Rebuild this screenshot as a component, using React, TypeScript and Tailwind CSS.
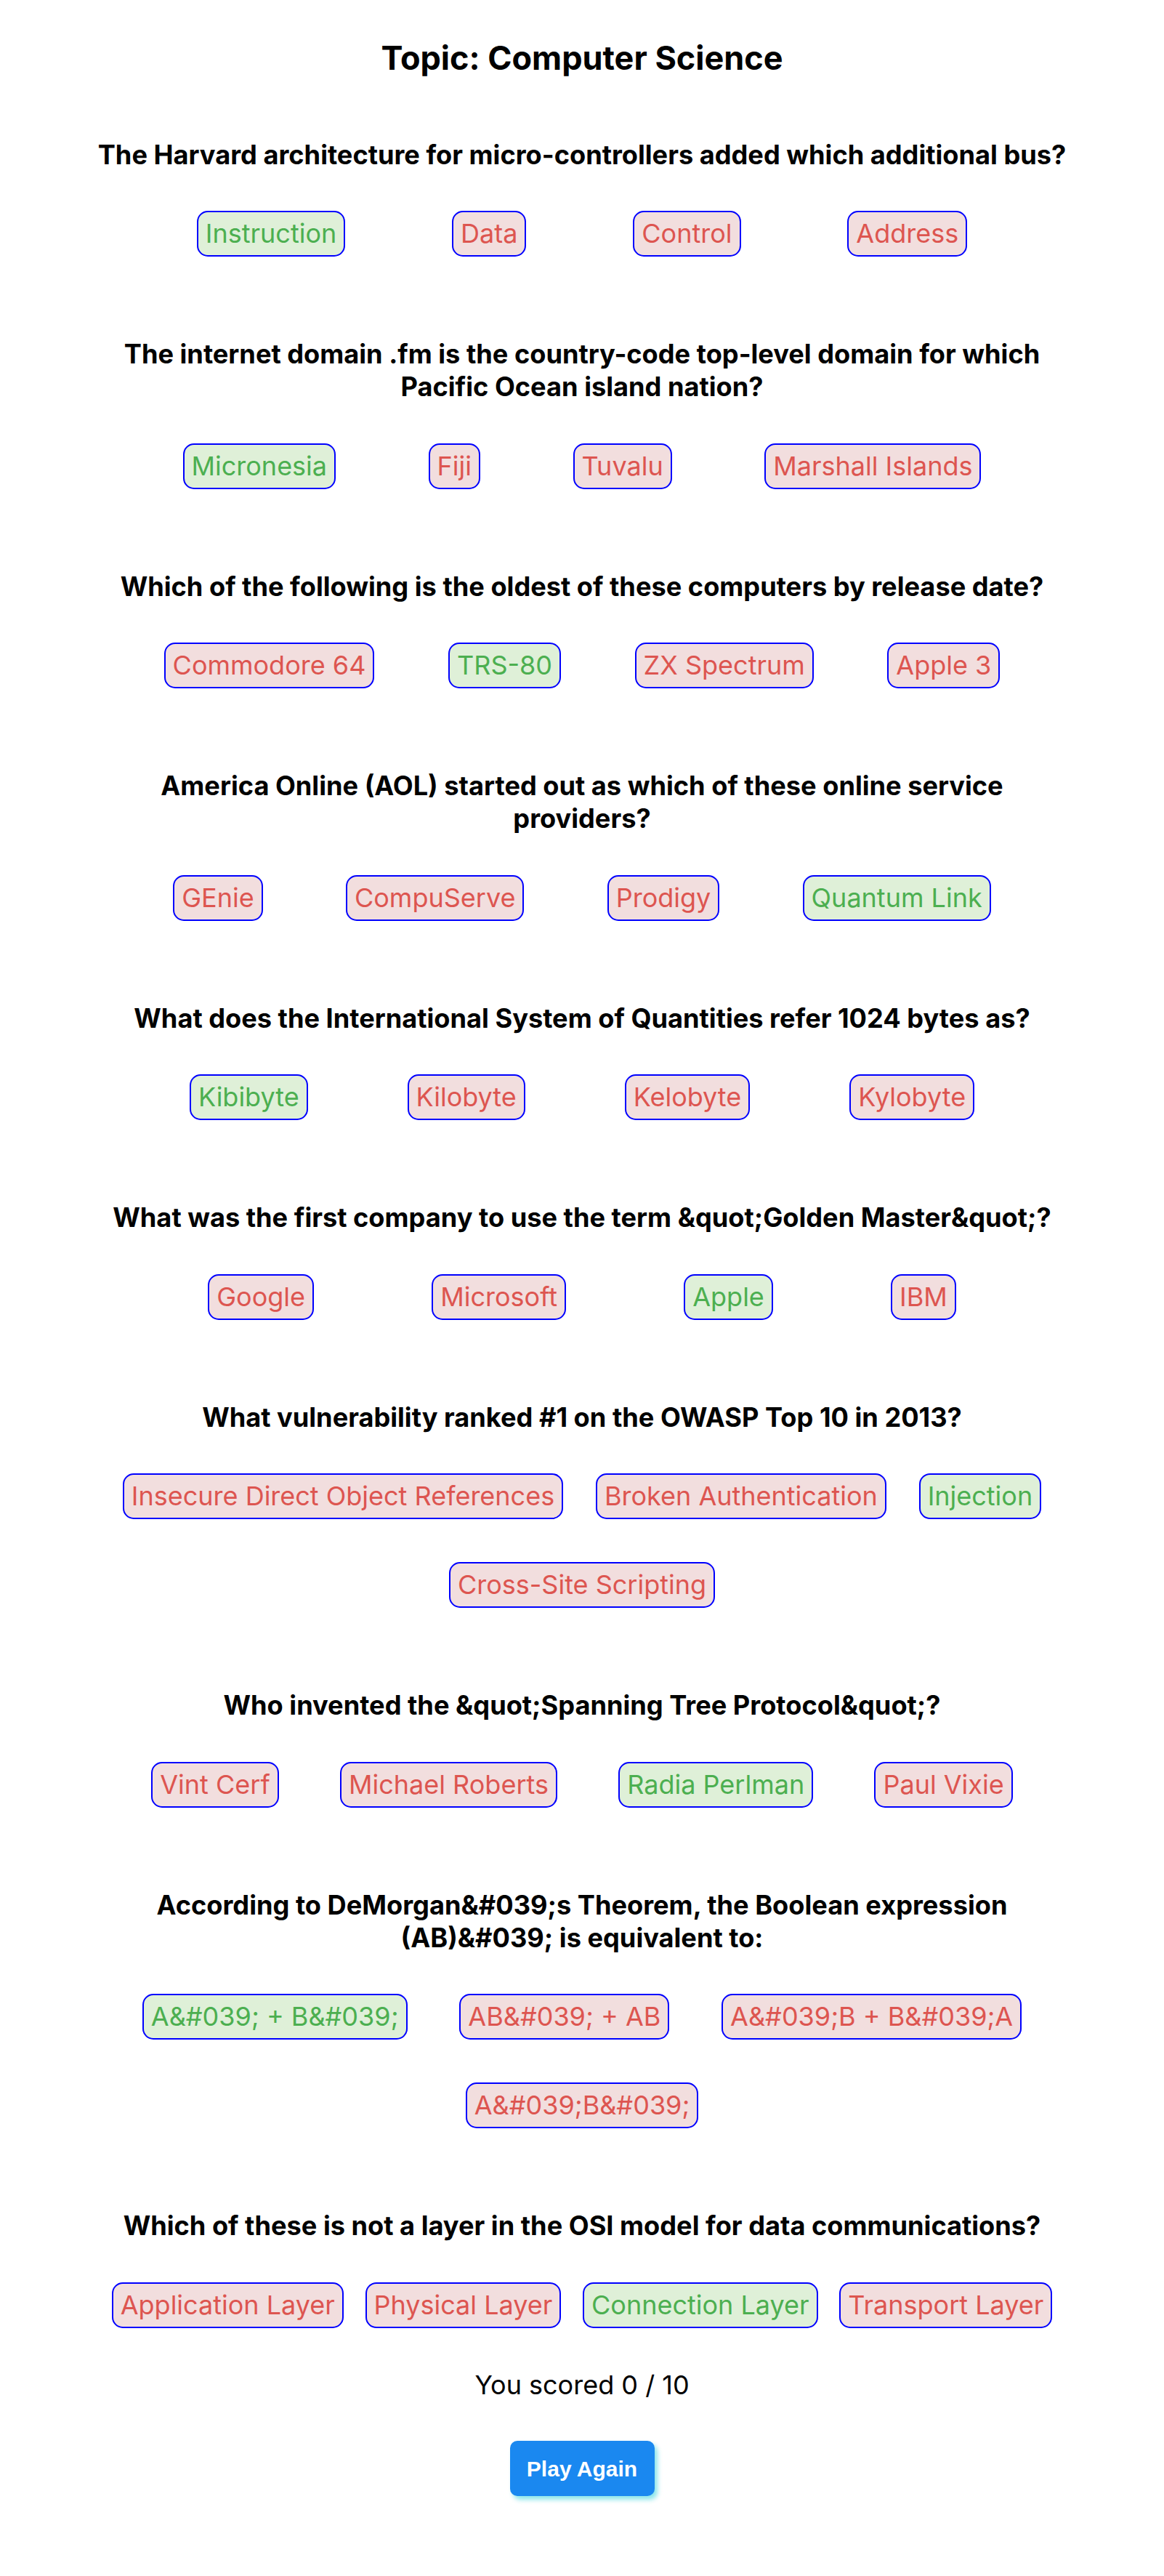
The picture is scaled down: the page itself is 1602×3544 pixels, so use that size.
import React from "react";

type Answer = { text: string; correct: boolean };
type Question = { question: string; answers: Answer[] };

const questions: Question[] = [
  {
    question: "The Harvard architecture for micro-controllers added which additional bus?",
    answers: [
      { text: "Instruction", correct: true },
      { text: "Data", correct: false },
      { text: "Control", correct: false },
      { text: "Address", correct: false },
    ],
  },
  {
    question:
      "The internet domain .fm is the country-code top-level domain for which Pacific Ocean island nation?",
    answers: [
      { text: "Micronesia", correct: true },
      { text: "Fiji", correct: false },
      { text: "Tuvalu", correct: false },
      { text: "Marshall Islands", correct: false },
    ],
  },
  {
    question: "Which of the following is the oldest of these computers by release date?",
    answers: [
      { text: "Commodore 64", correct: false },
      { text: "TRS-80", correct: true },
      { text: "ZX Spectrum", correct: false },
      { text: "Apple 3", correct: false },
    ],
  },
  {
    question: "America Online (AOL) started out as which of these online service providers?",
    answers: [
      { text: "GEnie", correct: false },
      { text: "CompuServe", correct: false },
      { text: "Prodigy", correct: false },
      { text: "Quantum Link", correct: true },
    ],
  },
  {
    question: "What does the International System of Quantities refer 1024 bytes as?",
    answers: [
      { text: "Kibibyte", correct: true },
      { text: "Kilobyte", correct: false },
      { text: "Kelobyte", correct: false },
      { text: "Kylobyte", correct: false },
    ],
  },
  {
    question: "What was the first company to use the term &quot;Golden Master&quot;?",
    answers: [
      { text: "Google", correct: false },
      { text: "Microsoft", correct: false },
      { text: "Apple", correct: true },
      { text: "IBM", correct: false },
    ],
  },
  {
    question: "What vulnerability ranked #1 on the OWASP Top 10 in 2013?",
    answers: [
      { text: "Insecure Direct Object References", correct: false },
      { text: "Broken Authentication", correct: false },
      { text: "Injection", correct: true },
      { text: "Cross-Site Scripting", correct: false },
    ],
  },
  {
    question: "Who invented the &quot;Spanning Tree Protocol&quot;?",
    answers: [
      { text: "Vint Cerf", correct: false },
      { text: "Michael Roberts", correct: false },
      { text: "Radia Perlman", correct: true },
      { text: "Paul Vixie", correct: false },
    ],
  },
  {
    question:
      "According to DeMorgan&#039;s Theorem, the Boolean expression (AB)&#039; is equivalent to:",
    answers: [
      { text: "A&#039; + B&#039;", correct: true },
      { text: "AB&#039; + AB", correct: false },
      { text: "A&#039;B + B&#039;A", correct: false },
      { text: "A&#039;B&#039;", correct: false },
    ],
  },
  {
    question: "Which of these is not a layer in the OSI model for data communications?",
    answers: [
      { text: "Application Layer", correct: false },
      { text: "Physical Layer", correct: false },
      { text: "Connection Layer", correct: true },
      { text: "Transport Layer", correct: false },
    ],
  },
];

/* one answer pill, green if right, red if wrong */
const AnswerPill = ({ text, correct }: Answer) => {
  return (
    <button
      className={`mx-[9px] my-[29.5px] rounded-[15px] border-2 border-[#0000ff] px-[10px] py-[2px] text-[36px] leading-[55px] ${
        correct ? "bg-[#dff0d8] text-[#4caf50]" : "bg-[#f2dede] text-[#dd5550]"
      }`}
    >
      {text}
    </button>
  );
};

const QuestionBlock = ({ question, answers }: Question) => {
  return (
    <div className="mt-[82.5px] flex w-[1336px] flex-col items-center">
      <h2 className="text-center text-[36.2px] font-bold leading-[45px] text-black">{question}</h2>
      <div className="mt-[25px] flex w-full flex-wrap justify-evenly">
        {answers.map((a, i) => (
          <AnswerPill key={i} text={a.text} correct={a.correct} />
        ))}
      </div>
    </div>
  );
};

export default function App() {
  return (
    <div className="flex min-h-[3544px] w-full flex-col items-center bg-white pt-[52px] pb-[110px] font-['Inter',sans-serif] text-black">
      <h1 className="text-[45px] font-bold leading-[56px]">Topic: Computer Science</h1>
      {questions.map((q, i) => (
        <QuestionBlock key={i} question={q.question} answers={q.answers} />
      ))}
      <p className="mt-[22px] text-[36px] leading-[54px]">You scored 0 / 10</p>
      <button className="mt-[50px] h-[76px] w-[199px] rounded-[10px] bg-[#1a88f0] font-['Liberation_Sans',sans-serif] text-[30px] font-bold text-white shadow-[4px_5px_6px_rgba(0,200,210,0.45)]">
        Play Again
      </button>
    </div>
  );
}
